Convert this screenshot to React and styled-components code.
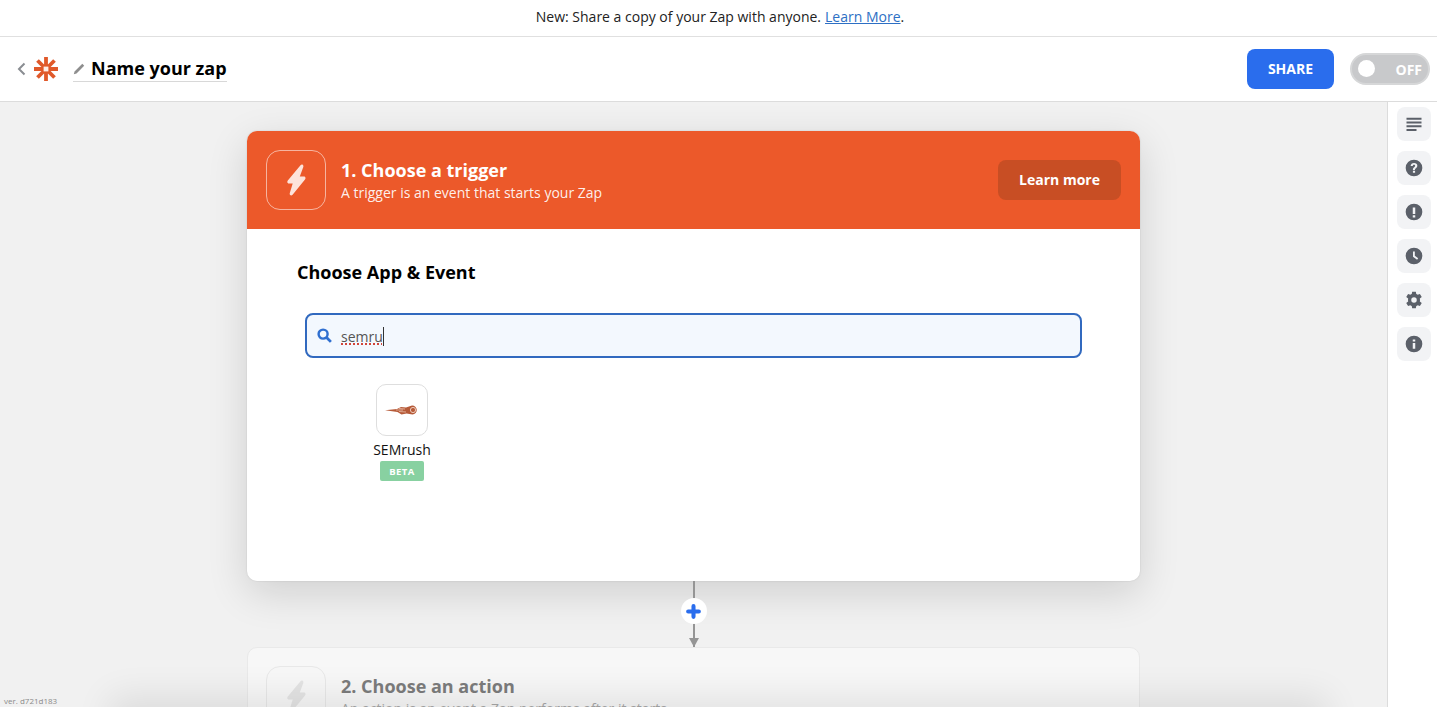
import React from "react";
import styled, { createGlobalStyle } from "styled-components";

const Global = createGlobalStyle`
  html, body { margin: 0; padding: 0; height: 100%; overflow: hidden; }
  body { font-family: "Open Sans", "Liberation Sans", sans-serif; color: #000; background: #f1f1f1; }
  * { box-sizing: border-box; }
`;

const Page = styled.div`
  width: 1437px; height: 707px; display: flex; flex-direction: column; overflow: hidden;
`;
const Banner = styled.div`
  height: 37px; flex: none; background: #fff; border-bottom: 1px solid #e0e0e0;
  display: flex; align-items: center; justify-content: center;
  font-size: 14px; color: #222; padding: 0 0 3px 3px;
  a { color: #2d6fc4; text-decoration: underline; margin-left: 4px; }
`;
const Header = styled.header`
  height: 65px; flex: none; background: #fff; border-bottom: 1px solid #dcdcdc;
  display: flex; align-items: center; padding: 0 7px 0 17px;
`;
const Back = styled.svg`width: 9px; height: 14px; margin-right: 8px;`;
const Logo = styled.svg`width: 24px; height: 24px; margin-right: 15px;`;
const NameBox = styled.div`
  display: flex; align-items: center; height: 26px; border-bottom: 1px solid #d8d8d8;
`;
const Pencil = styled.svg`width: 12px; height: 12px; margin-right: 6px;`;
const ZapName = styled.div`font-size: 18px; font-weight: 700; line-height: 24px; margin-top: -1px;`;
const Spacer = styled.div`flex: 1;`;
const ShareButton = styled.button`
  width: 87px; height: 40px; border: 0; border-radius: 8px; background: #2a6ded; color: #fff;
  font: 700 14px "Open Sans", sans-serif; margin-right: 16px; padding: 0 0 2px;
`;
const Toggle = styled.div`
  width: 80px; height: 32px; border-radius: 16px; background: #c8c9cb; color: #fff; position: relative;
  display: flex; align-items: center; justify-content: flex-end; padding-right: 6px;
  font-size: 14px; font-weight: 700; border: 2px solid #d6d7d8;
  &::before { content: ""; position: absolute; left: 6px; top: 5px; width: 17px; height: 17px; border-radius: 50%; background: #fff; }
`;
const Body = styled.div`flex: 1; display: flex; min-height: 0;`;
const Canvas = styled.main`
  flex: 1; position: relative; overflow: hidden; background: #f1f1f1; padding-top: 29px;
  display: flex; flex-direction: column; align-items: center;
`;
const Side = styled.aside`
  width: 50px; flex: none; background: #fff; border-left: 1px solid #dcdcdc; padding-top: 5px;
  display: flex; flex-direction: column; align-items: center; gap: 10px;
`;
const SideButton = styled.div`
  width: 34px; height: 34px; border-radius: 8px; background: #f2f3f5;
  display: flex; align-items: center; justify-content: center; margin-left: 3px;
  svg { width: 20px; height: 20px; }
`;
const Card = styled.section`
  width: 893px; height: 450px; flex: none; background: #fff; border-radius: 10px; overflow: hidden;
  box-shadow: 0 12px 40px rgba(0,0,0,.14), 0 0 2px rgba(0,0,0,.14); position: relative; z-index: 1;
`;
const CardHead = styled.div`
  height: 98px; background: #ec592a; color: #fff; display: flex; align-items: center; padding: 0 19px;
`;
const IconBox = styled.div`
  width: 60px; height: 60px; flex: none; border-radius: 14px; border: 1px solid ${p => p.$muted ? "#e8e8e8" : "rgba(255,255,255,.55)"};
  display: flex; align-items: center; justify-content: center; margin-right: 15px;
  svg { width: 20px; height: 32px; }
`;
const HeadText = styled.div`
  flex: 1; display: flex; flex-direction: column; padding-top: ${p => p.$muted ? "8px" : "0"};
`;
const StepTitle = styled.div`font-size: 18px; font-weight: 700; line-height: 24px; color: ${p => p.$muted ? "#7c7c7c" : "#fff"};`;
const StepSub = styled.div`font-size: 14px; line-height: 20px; margin-top: 1px; color: ${p => p.$muted ? "#a8a8a8" : "rgba(255,255,255,.92)"};`;
const LearnMore = styled.button`
  width: 123px; height: 40px; border: 0; border-radius: 8px; background: #c84e24; color: #fff;
  font: 700 14px "Open Sans", sans-serif; padding: 0 0 2px;
`;
const CardBody = styled.div`padding: 31px 50px 0;`;
const SectionTitle = styled.h2`margin: 0; font-size: 18px; line-height: 24px; font-weight: 700; color: #000;`;
const Search = styled.div`
  width: 777px; height: 45px; margin: 29px 0 0 8px; border: 2px solid #3169bf; border-radius: 8px; background: #f3f8fe;
  display: flex; align-items: center; padding-left: 10px; font-size: 14px; color: #555;
  svg { width: 15px; height: 15px; margin-right: 9px; }
`;
const Typed = styled.span`
  text-decoration: underline dotted #d0453a 2px; text-underline-offset: 2px; margin-top: 1px;
`;
const Caret = styled.span`width: 1px; height: 19px; background: #333; margin-top: 1px;`;
const AppItem = styled.div`
  width: 90px; margin: 26px 0 0 60px; display: flex; flex-direction: column; align-items: center;
`;
const AppIcon = styled.div`
  width: 52px; height: 52px; border-radius: 10px; border: 1px solid #dedede; background: #fff;
  display: flex; align-items: center; justify-content: center;
  svg { width: 34px; height: 10px; }
`;
const AppName = styled.div`font-size: 14px; line-height: 20px; margin-top: 4px; color: #111;`;
const Beta = styled.div`
  width: 44px; height: 20px; border-radius: 2px; background: #88d1a1; color: #fff; margin-top: 1px;
  font-size: 9.5px; font-weight: 700; letter-spacing: .4px; display: flex; align-items: center; justify-content: center;
`;
const Connector = styled.div`
  width: 2px; height: 66px; flex: none; background: #959595; position: relative; z-index: 2;
  &::after {
    content: ""; position: absolute; left: -4px; bottom: 0; width: 0; height: 0;
    border-left: 5px solid transparent; border-right: 5px solid transparent; border-top: 9px solid #959595;
  }
`;
const AddDot = styled.div`
  position: absolute; left: -12px; top: 17px; width: 26px; height: 26px; border-radius: 50%; background: #fff;
  display: flex; align-items: center; justify-content: center;
  svg { width: 15px; height: 15px; }
`;
const NextCard = styled.section`
  width: 893px; height: 120px; flex: none; background: #f7f7f7; border: 1px solid #e9e9e9; border-radius: 10px;
  display: flex; align-items: flex-start; padding: 18px 18px 0; position: relative; z-index: 1;
`;
const BottomFade = styled.div`
  position: absolute; left: 120px; right: 70px; bottom: -30px; height: 30px; z-index: 3;
  box-shadow: 0 0 36px 10px rgba(0,0,0,.09); background: rgba(0,0,0,.05);
`;
const Version = styled.div`
  position: absolute; left: 4px; bottom: 1px; font-size: 8px; line-height: 11px; color: #8a8a8a; z-index: 4;
`;

const Bolt = ({ color }) => (
  <svg viewBox="0 0 20 32"><path d="M14.500 1.200 1.800 16.500C.8 18 1.300 19.500 3 19.500h3.700L3.800 29c-.6 2.200 1.500 3.200 2.800 1.700L19 15.500c1-1.500.5-3-1.200-3h-4L17.300 3c.6-2.200-1.500-3.300-2.800-1.800z" fill={color} /></svg>
);
const Glyph = ({ d }) => <svg viewBox="0 0 24 24"><path d={d} fill="#5b6069" fillRule="evenodd" /></svg>;

const HELP = "M12 2a10 10 0 1 0 0 20 10 10 0 0 0 0-20zm-1.300 15.800h2.600v-2.500h-2.600zM12 6c-2.300 0-3.900 1.300-4 3.600h2.500c.1-1 .6-1.500 1.500-1.500s1.400.5 1.400 1.200c0 .8-.5 1.200-1.200 1.700-1 .7-1.500 1.500-1.500 3v.4h2.400v-.3c0-.8.3-1.200 1.100-1.800 1-.7 1.800-1.500 1.800-3C16 7.300 14.400 6 12 6z";
const ALERT = "M12 2a10 10 0 1 0 0 20 10 10 0 0 0 0-20zm-1.500 4.500h3v8h-3zm0 9.500h3v2.500h-3z";
const CLOCK = "M12 2a10 10 0 1 0 0 20 10 10 0 0 0 0-20zm-1.200 4.500h2.200v5.200l4 3-1.300 1.800-4.900-3.700z";
const GEAR = "M14.200 2h-4.400l-.5 2.900c-.6.2-1.200.6-1.700.9L4.900 4.700 2.700 8.400 5 10.300a7 7 0 0 0 0 3.400l-2.300 1.900 2.200 3.700 2.700-1.100c.5.300 1.100.7 1.700.9l.5 2.900h4.400l.5-2.900c.6-.2 1.200-.6 1.700-.9l2.700 1.100 2.200-3.700-2.300-1.900a7 7 0 0 0 0-3.400l2.300-1.900-2.200-3.700-2.700 1.100c-.5-.3-1.100-.7-1.700-.9zM12 8.700a3.300 3.300 0 1 1 0 6.600 3.300 3.300 0 0 1 0-6.600z";
const INFO = "M12 2a10 10 0 1 0 0 20 10 10 0 0 0 0-20zm-1.500 4.500h3v2.600h-3zm0 4.200h3v7h-3z";

export default function App() {
  return (
    <Page>
      <Global />
      <Banner>New: Share a copy of your Zap with anyone. <a>Learn More</a>.</Banner>
      <Header>
        <Back viewBox="0 0 9 14"><path d="M7.500 1.500 2 7l5.500 5.500" fill="none" stroke="#8a8d92" strokeWidth="2" /></Back>
        <Logo viewBox="0 0 24 24">
          <g stroke="#e0592a" strokeWidth="3.800">
            <path d="M12 0v24M0 12h24M3.500 3.500l17 17M20.500 3.500l-17 17" />
          </g>
          <rect x="9.600" y="9.600" width="4.800" height="4.800" fill="#fdeee8" />
        </Logo>
        <NameBox>
          <Pencil viewBox="0 0 12 12"><path d="M9.300.8 11.200 2.700 3.500 10.400.8 11.200 1.600 8.500z" fill="#8e8e8e" /></Pencil>
          <ZapName>Name your zap</ZapName>
        </NameBox>
        <Spacer />
        <ShareButton>SHARE</ShareButton>
        <Toggle>OFF</Toggle>
      </Header>
      <Body>
        <Canvas>
          <Card>
            <CardHead>
              <IconBox><Bolt color="#fde3da" /></IconBox>
              <HeadText>
                <StepTitle>1. Choose a trigger</StepTitle>
                <StepSub>A trigger is an event that starts your Zap</StepSub>
              </HeadText>
              <LearnMore>Learn more</LearnMore>
            </CardHead>
            <CardBody>
              <SectionTitle>Choose App &amp; Event</SectionTitle>
              <Search>
                <svg viewBox="0 0 16 16"><circle cx="6.500" cy="6.500" r="4.800" fill="none" stroke="#2f6fd0" strokeWidth="2.600" /><path d="m10.200 10.200 4.600 4.600" stroke="#2f6fd0" strokeWidth="3" /></svg>
                <Typed>semru</Typed><Caret />
              </Search>
              <AppItem>
                <AppIcon>
                  <svg viewBox="0 0 34 10">
                    <path d="M0 5.200 12 4l4-2 5 .5L27 .5a4.500 4.500 0 0 1 .5 9l-6-1-5 1-4-2.500z" fill="#b65a38" />
                    <path d="M11 5h7M14 3.500l6 .5M14 6.500l7 .5" stroke="#f1cdbb" strokeWidth=".7" fill="none" />
                    <circle cx="28" cy="5" r="2.600" fill="none" stroke="#f3d6c8" strokeWidth=".9" />
                  </svg>
                </AppIcon>
                <AppName>SEMrush</AppName>
                <Beta>BETA</Beta>
              </AppItem>
            </CardBody>
          </Card>
          <Connector>
            <AddDot>
              <svg viewBox="0 0 14 14"><path d="M7 2v10M2 7h10" stroke="#2a6ded" strokeWidth="3.800" strokeLinecap="round" /></svg>
            </AddDot>
          </Connector>
          <NextCard>
            <IconBox $muted><Bolt color="#e4e4e4" /></IconBox>
            <HeadText $muted>
              <StepTitle $muted>2. Choose an action</StepTitle>
              <StepSub $muted>An action is an event a Zap performs after it starts</StepSub>
            </HeadText>
          </NextCard>
          <BottomFade />
          <Version>ver. d721d183</Version>
        </Canvas>
        <Side>
          <SideButton>
            <svg viewBox="0 0 24 24"><path d="M3 4.500h18v2.300H3zM3 9h18v2.300H3zm0 4.500h18v2.300H3zM3 18h12v2.300H3z" fill="#5b6069" /></svg>
          </SideButton>
          <SideButton><Glyph d={HELP} /></SideButton>
          <SideButton><Glyph d={ALERT} /></SideButton>
          <SideButton><Glyph d={CLOCK} /></SideButton>
          <SideButton><Glyph d={GEAR} /></SideButton>
          <SideButton><Glyph d={INFO} /></SideButton>
        </Side>
      </Body>
    </Page>
  );
}
